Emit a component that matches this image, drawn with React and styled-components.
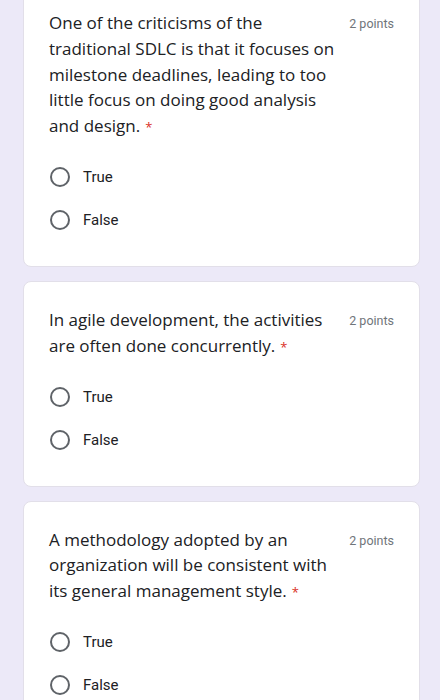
import React from "react";
import styled, { createGlobalStyle } from "styled-components";

const Global = createGlobalStyle`
  html, body { margin: 0; padding: 0; background: #ece9f8; }
  body { font-family: Roboto, "Open Sans", Arial, sans-serif; overflow: hidden; }
`;

const Page = styled.main`
  display: flex;
  flex-direction: column;
  gap: 14px;
  padding: 0 20px 0 23px;
  margin-top: -16px;
`;

const Card = styled.section`
  background: #ffffff;
  border: 1px solid #e2dfe9;
  border-radius: 8px;
  padding: 25px 25px 35px 25px;
  display: flex;
  flex-direction: column;
`;

const Header = styled.div`
  display: flex;
  align-items: flex-start;
  gap: 10px;
`;

const Question = styled.div`
  flex: 1;
  font-family: "Open Sans", Roboto, Arial, sans-serif;
  font-size: 17px;
  line-height: 25.8px;
  color: #202124;
`;

const Required = styled.span`
  color: #d93025;
  font-size: 13px;
  margin-left: 5px;
`;

const Points = styled.div`
  flex: none;
  font-family: Roboto, Arial, sans-serif;
  font-size: 12.5px;
  color: #70757a;
  line-height: 20px;
  padding-top: 4px;
`;

const Options = styled.div`
  display: flex;
  flex-direction: column;
  gap: 22px;
  margin-top: 26px;
`;

const Option = styled.label`
  display: flex;
  align-items: center;
  gap: 13px;
  height: 21px;
  padding-left: 1px;
`;

const Radio = styled.span`
  width: 20px;
  height: 20px;
  box-sizing: border-box;
  border: 2px solid #5f6368;
  border-radius: 50%;
  flex: none;
`;

const OptionText = styled.span`
  font-family: Roboto, Arial, sans-serif;
  font-size: 15px;
  color: #202124;
`;

const questions = [
  "One of the criticisms of the traditional SDLC is that it focuses on milestone deadlines, leading to too little focus on doing good analysis and design.",
  "In agile development, the activities are often done concurrently.",
  "A methodology adopted by an organization will be consistent with its general management style.",
];

export default function App() {
  return (
    <>
      <Global />
      <Page>
        {questions.map((q) => (
          <Card key={q}>
            <Header>
              <Question>
                {q}
                <Required>*</Required>
              </Question>
              <Points>2 points</Points>
            </Header>
            <Options>
              <Option>
                <Radio />
                <OptionText>True</OptionText>
              </Option>
              <Option>
                <Radio />
                <OptionText>False</OptionText>
              </Option>
            </Options>
          </Card>
        ))}
      </Page>
    </>
  );
}
